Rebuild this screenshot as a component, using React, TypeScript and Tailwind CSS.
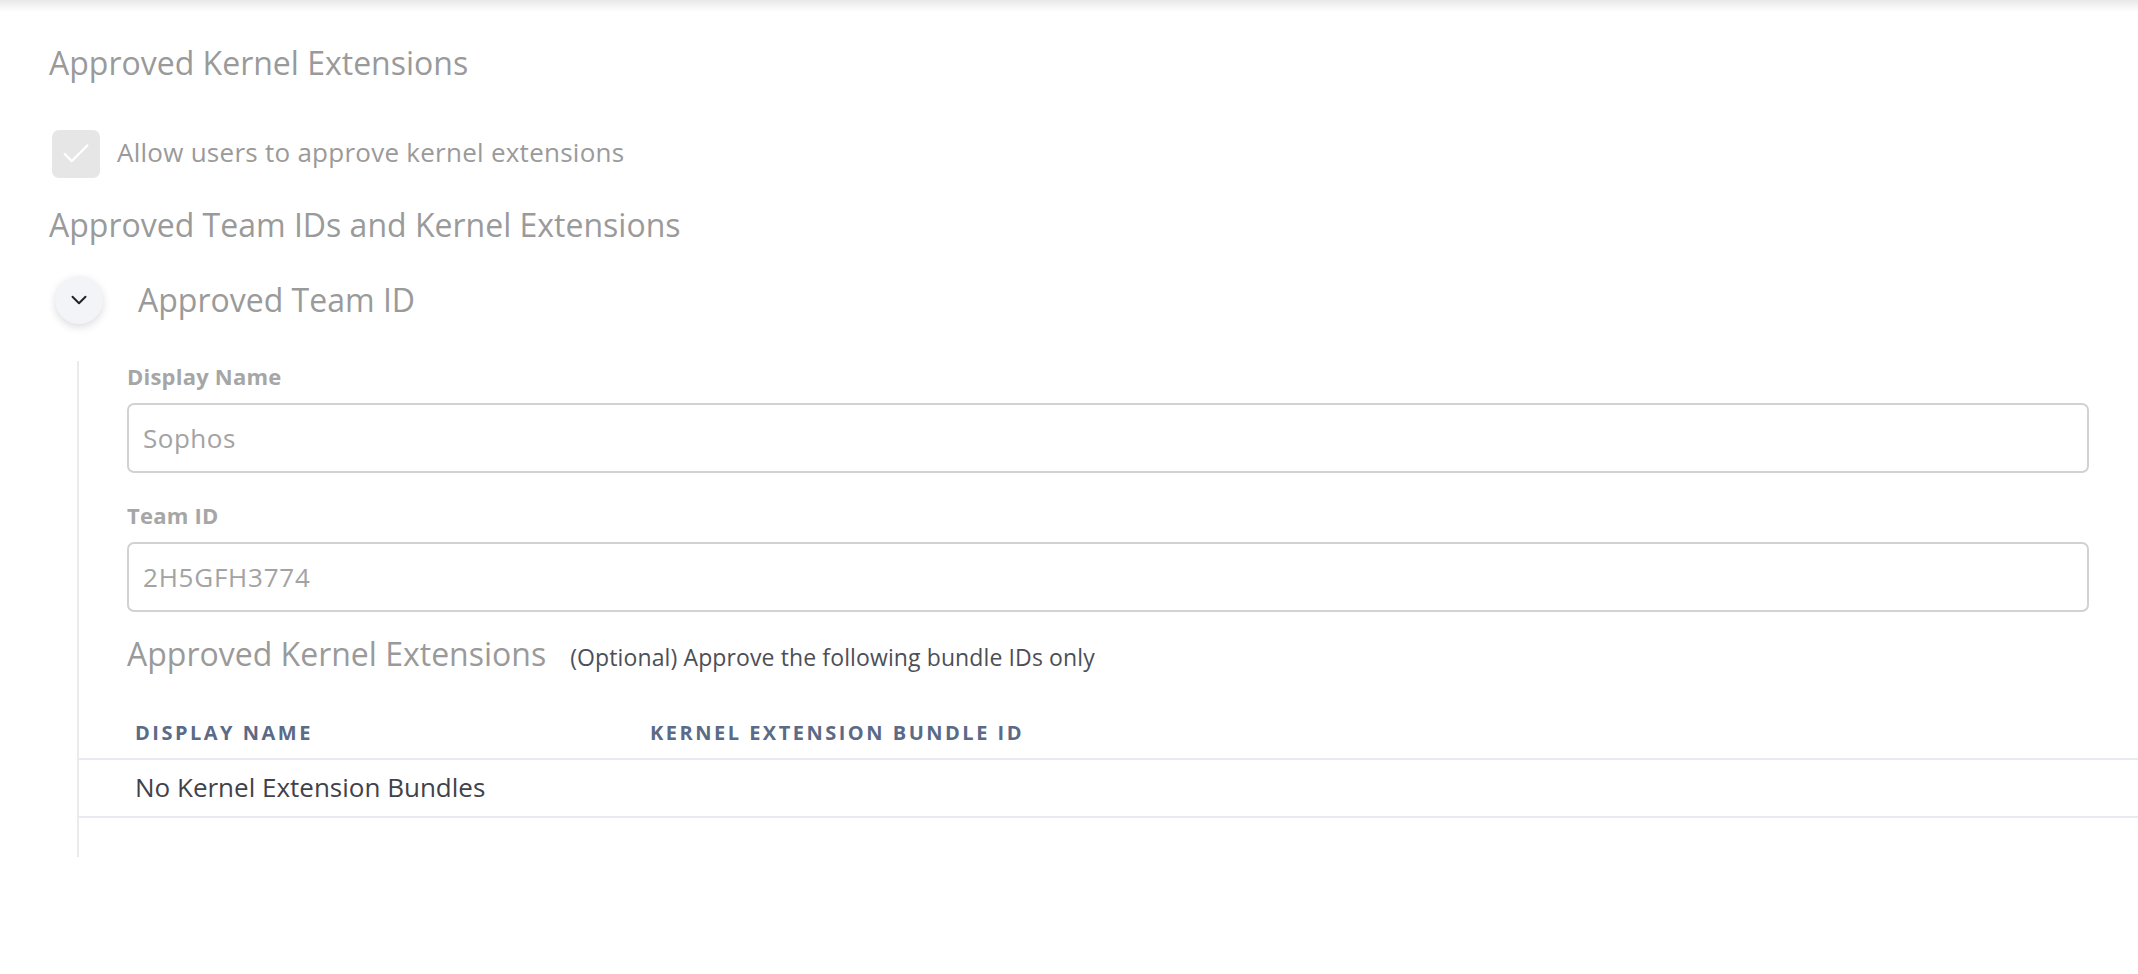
import { Check, ChevronDown } from 'lucide-react';

export default function App() {
  return (
    <div className="min-h-screen bg-white font-['Open_Sans',sans-serif]">
      {/* top shadow */}
      <div className="h-[12px] bg-gradient-to-b from-[#e8e8e8] to-white" />

      <div className="px-[49px]">
        <h1 className="mt-[33px] text-[32px] leading-[36px] text-[#9a9a9a]">Approved Kernel Extensions</h1>

        <label className="mt-[49px] flex items-center gap-[17px] pl-[3px]">
          <span className="flex h-[48px] w-[48px] items-center justify-center rounded-[7px] bg-[#e6e6e6]">
            <Check className="h-[34px] w-[34px] text-white" strokeWidth={1.6} />
          </span>
          <span className="pb-[5px] text-[26px] leading-[30px] tracking-[0.01em] text-[#9a9a9a]">Allow users to approve kernel extensions</span>
        </label>

        <h2 className="mt-[29px] text-[32px] leading-[36px] text-[#9a9a9a]">Approved Team IDs and Kernel Extensions</h2>

        <div className="mt-[33px] flex items-center gap-[35px] pl-[6px]">
          <button className="flex h-[48px] w-[48px] items-center justify-center rounded-full bg-[#f3f4f8] shadow-[0_3px_8px_rgba(0,0,0,0.14)]">
            <ChevronDown className="h-[26px] w-[26px] text-[#222]" strokeWidth={1.8} />
          </button>
          <span className="text-[32px] leading-[36px] text-[#9a9a9a]">Approved Team ID</span>
        </div>
      </div>

      {/* expanded team id */}
      <div className="ml-[77px] mt-[37px] border-l-2 border-[#ebebeb] pb-[39px]">
        <div className="pl-[48px] pr-[49px] pt-[2px]">
          <div className="text-[22px] font-bold leading-[26px] tracking-[0.01em] text-[#a6a6a6]">Display Name</div>
          <div className="mt-[14px] flex h-[70px] items-center rounded-[7px] border-2 border-[#d2d2d2] px-[14px] text-[26px] tracking-[0.02em] text-[#a3a3a3]">
            Sophos
          </div>

          <div className="mt-[29px] text-[22px] font-bold leading-[26px] tracking-[0.01em] text-[#a6a6a6]">Team ID</div>
          <div className="mt-[14px] flex h-[70px] items-center rounded-[7px] border-2 border-[#d2d2d2] px-[14px] text-[26px] tracking-[0.03em] text-[#a3a3a3]">
            2H5GFH3774
          </div>

          <div className="mt-[24px] flex items-baseline gap-[24px]">
            <span className="text-[32px] leading-[36px] text-[#9a9a9a]">Approved Kernel Extensions</span>
            <span className="text-[23px] tracking-[0.005em] text-[#4c4f57]">(Optional) Approve the following bundle IDs only</span>
          </div>
        </div>

        <div className="mt-[46px]">
          <div className="grid grid-cols-[515px_1fr] border-b-2 border-[#e8eaf0] pb-[13px] text-[20px] font-bold uppercase leading-[24px] tracking-[0.125em] text-[#5b6a86]">
            <div className="pl-[56px]">Display Name</div>
            <div className="pl-[56px]">Kernel Extension Bundle ID</div>
          </div>
          <div className="grid h-[58px] grid-cols-[515px_1fr] items-center border-b-2 border-[#e8eaf0] text-[26px] text-[#414249]">
            <div className="whitespace-nowrap pl-[56px]">No Kernel Extension Bundles</div>
            <div />
          </div>
        </div>
      </div>
    </div>
  );
}
